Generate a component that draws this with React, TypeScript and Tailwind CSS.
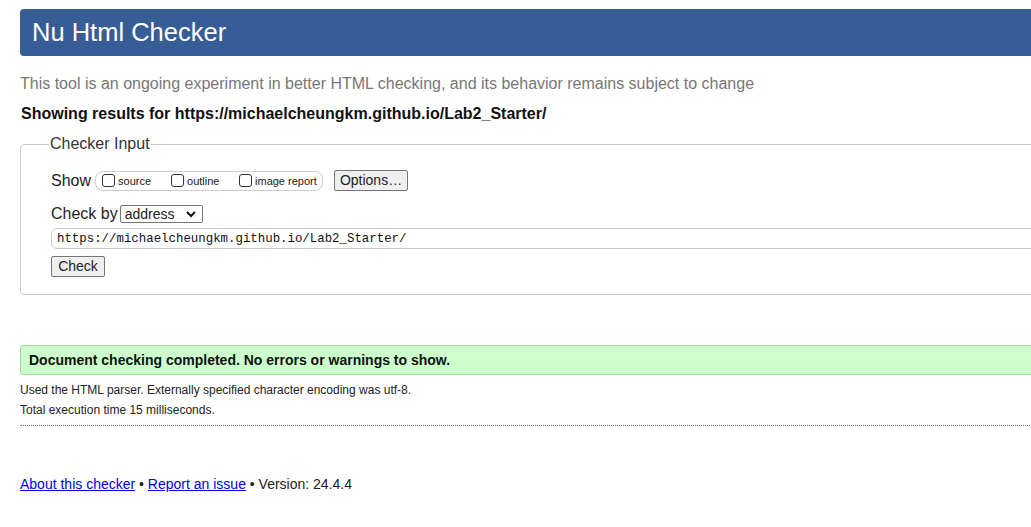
import React from "react";

const sans = { fontFamily: '"Liberation Sans", Arial, sans-serif' };

function Checkbox() {
  return (
    <span className="inline-block shrink-0 w-[13px] h-[13px] border border-[#333] rounded-[3px] bg-white mr-[3px]" />
  );
}

export default function App() {
  return (
    <div className="w-[1031px] h-[527px] overflow-hidden bg-white text-[#222]" style={sans}>
      <div className="w-[1200px] pl-[20px] pt-[9px]">
        <div className="h-[47px] bg-[#365d95] rounded-l-[4px] pl-[12px] text-white text-[25.5px] leading-[46px]">
          Nu Html Checker
        </div>
        <p className="mt-[18px] text-[16px] leading-[20px] text-[#777]">
          This tool is an ongoing experiment in better HTML checking, and its behavior remains subject to change
        </p>
        <p className="mt-[10px] ml-[1px] text-[16px] leading-[20px] font-bold text-[#111]">
          Showing results for https://michaelcheungkm.github.io/Lab2_Starter/
        </p>
        <fieldset className="mt-[11px] border border-[#ccc] rounded-[4px] pl-[30px] pr-[10px] pb-[17px] pt-[6px]">
          <legend className="px-[1px] ml-[-2px] text-[16px] leading-[18px] text-[#333]">Checker Input</legend>
          <div className="flex items-center h-[21px] mt-[11px]">
            <span className="text-[16px] mr-[4px]">Show</span>
            <span className="flex items-center h-[20px] w-[228px] border border-[#ccc] rounded-[8px] pl-[6px] text-[11px] text-[#222]">
              <label className="flex items-center w-[69px]"><Checkbox /><span className="mt-[2px]">source</span></label>
              <label className="flex items-center w-[68px]"><Checkbox /><span className="mt-[2px]">outline</span></label>
              <label className="flex items-center"><Checkbox /><span className="mt-[2px]">image report</span></label>
            </span>
            <span className="ml-[11px] h-[21px] w-[74px] flex items-center justify-center border border-[#767676] rounded-[2px] bg-[#efefef] text-[14px]">
              Options…
            </span>
          </div>
          <div className="flex items-center h-[20px] mt-[13px]">
            <span className="text-[16px] mr-[2px]">Check by</span>
            <span className="h-[18px] w-[83px] flex items-center justify-between border border-[#767676] rounded-[2px] bg-white pl-[4px] pr-[6px] text-[14px]">
              address
              <svg width="10" height="8" viewBox="0 0 10 8"><path d="M1 2 L5 6 L9 2" fill="none" stroke="#111" strokeWidth="2" /></svg>
            </span>
          </div>
          <div className="mt-[4px] h-[21px] border border-[#ccc] rounded-[6px] pl-[5px] flex items-center text-[12.4px] text-[#111]" style={{ fontFamily: '"Liberation Mono", monospace' }}>
            <span className="mt-[1px]">https://michaelcheungkm.github.io/Lab2_Starter/</span>
          </div>
          <div className="mt-[7px] h-[21px] w-[54px] flex items-center justify-center border border-[#767676] rounded-[2px] bg-[#efefef] text-[14px]">
            Check
          </div>
        </fieldset>
        <div className="mt-[50px] h-[30px] border border-[#9fdc9f] rounded-[3px] bg-[#ccffcc] pl-[8px] flex items-center text-[14px] font-bold text-[#111]">
          Document checking completed. No errors or warnings to show.
        </div>
        <p className="mt-[5px] text-[12px] leading-[20px]">
          Used the HTML parser. Externally specified character encoding was utf-8.
        </p>
        <p className="text-[12px] leading-[20px]">Total execution time 15 milliseconds.</p>
        <div className="mt-[5px] border-t border-dotted border-[#777]" />
        <p className="mt-[48px] text-[14px] leading-[20px]">
          <a className="text-[#0000ee] underline" href="#">About this checker</a>
          {" • "}
          <a className="text-[#0000ee] underline" href="#">Report an issue</a>
          {" • Version: 24.4.4"}
        </p>
      </div>
    </div>
  );
}
